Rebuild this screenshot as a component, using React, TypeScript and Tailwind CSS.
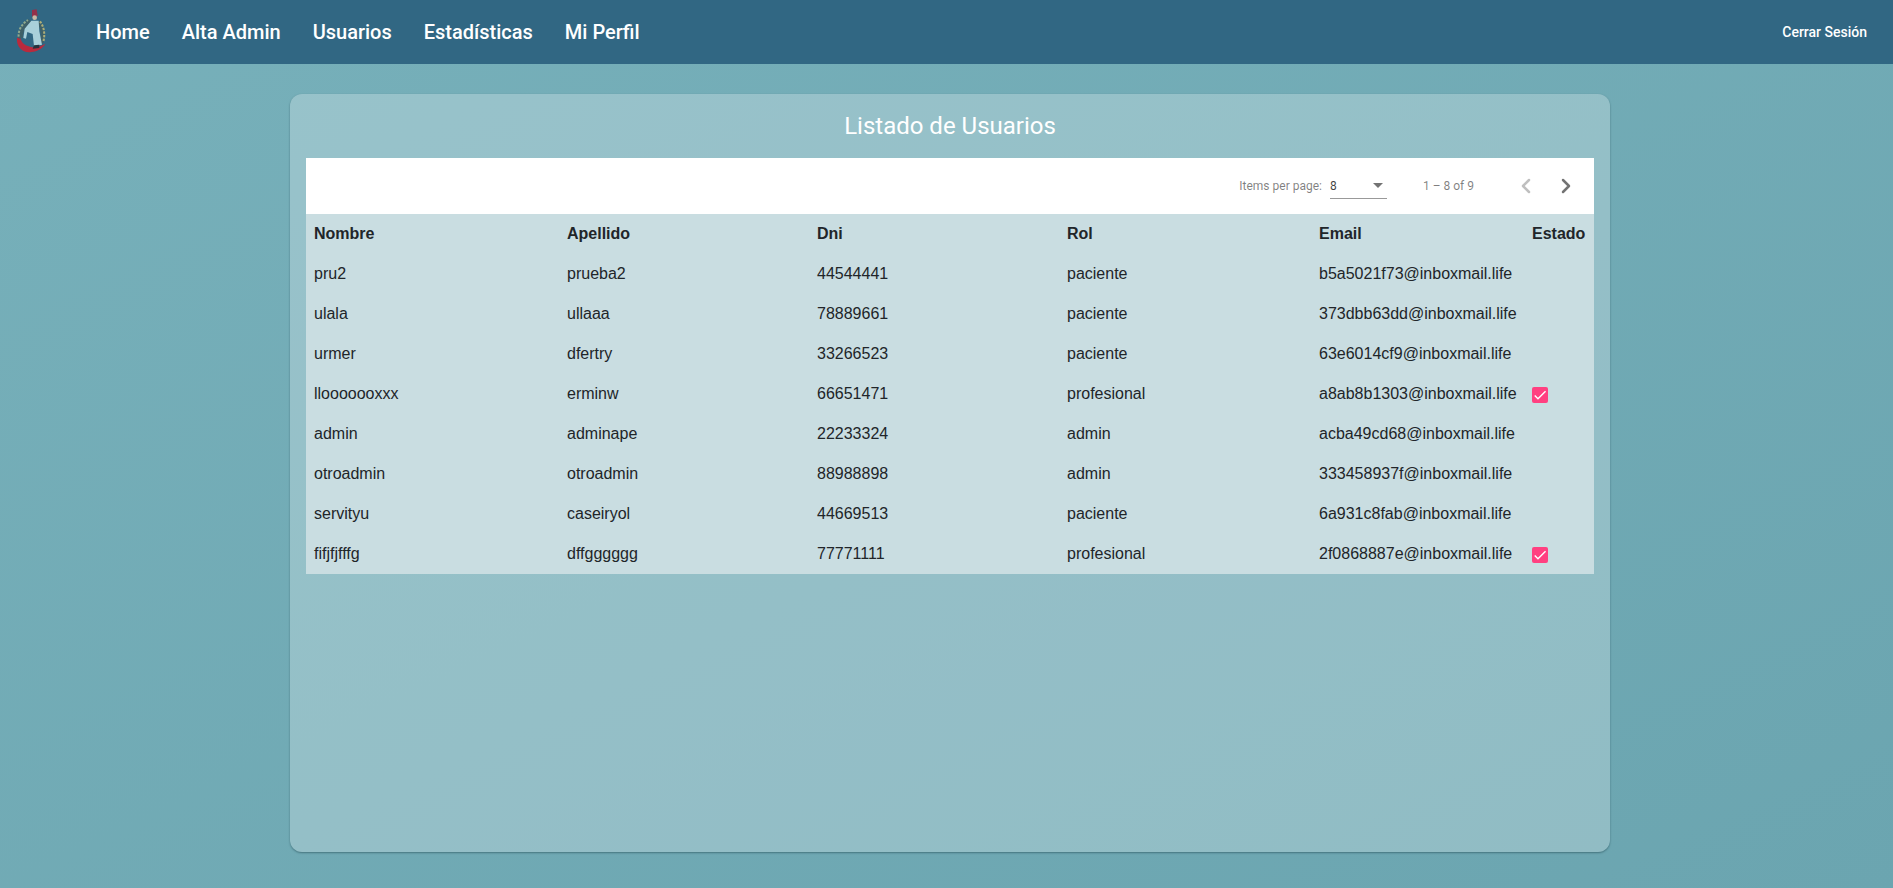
import { ChevronLeft, ChevronRight } from 'lucide-react'

const usuarios = [
  { nombre: 'pru2', apellido: 'prueba2', dni: '44544441', rol: 'paciente', email: 'b5a5021f73@inboxmail.life', estado: false },
  { nombre: 'ulala', apellido: 'ullaaa', dni: '78889661', rol: 'paciente', email: '373dbb63dd@inboxmail.life', estado: false },
  { nombre: 'urmer', apellido: 'dfertry', dni: '33266523', rol: 'paciente', email: '63e6014cf9@inboxmail.life', estado: false },
  { nombre: 'llooooooxxx', apellido: 'erminw', dni: '66651471', rol: 'profesional', email: 'a8ab8b1303@inboxmail.life', estado: true },
  { nombre: 'admin', apellido: 'adminape', dni: '22233324', rol: 'admin', email: 'acba49cd68@inboxmail.life', estado: false },
  { nombre: 'otroadmin', apellido: 'otroadmin', dni: '88988898', rol: 'admin', email: '333458937f@inboxmail.life', estado: false },
  { nombre: 'servityu', apellido: 'caseiryol', dni: '44669513', rol: 'paciente', email: '6a931c8fab@inboxmail.life', estado: false },
  { nombre: 'fifjfjfffg', apellido: 'dffgggggg', dni: '77771111', rol: 'profesional', email: '2f0868887e@inboxmail.life', estado: true },
]

const columnas = [
  { titulo: 'Nombre', ancho: 'w-[253px]' },
  { titulo: 'Apellido', ancho: 'w-[250px]' },
  { titulo: 'Dni', ancho: 'w-[250px]' },
  { titulo: 'Rol', ancho: 'w-[252px]' },
  { titulo: 'Email', ancho: 'w-[213px]' },
  { titulo: 'Estado', ancho: 'w-[70px]' },
]

const links = ['Home', 'Alta Admin', 'Usuarios', 'Estadísticas', 'Mi Perfil']

// logo: figura con alas sobre la media luna roja
function Logo() {
  return (
    <svg width="40" height="52" viewBox="0 0 120 156" className="block">
      <path d="M15 96 C12 124 34 142 58 138 C76 136 92 128 100 113 C86 122 70 126 54 122 C38 119 27 110 25 94 Z" fill="#b92a3d" />
      <path d="M20 98 C16 76 28 52 50 40 L58 48 C42 60 32 76 32 96 Z" fill="#3f6068" />
      <path d="M20 92 C18 74 30 52 48 42" fill="none" stroke="#8fa98e" strokeWidth="6" strokeDasharray="7 4" />
      <path d="M82 44 C96 58 102 84 94 112 L84 112 C90 88 86 66 76 52 Z" fill="#3f6068" />
      <path d="M84 46 C96 62 100 84 94 108" fill="none" stroke="#aeae78" strokeWidth="6" strokeDasharray="7 4" />
      <path d="M60 12 L74 10 L77 30 L60 32 Z" fill="#93304a" />
      <circle cx="68" cy="35" r="7" fill="#c9b8a6" />
      <path d="M58 44 L80 44 L82 76 L90 116 L66 120 L62 84 L46 78 L42 98 L34 96 L38 68 Z" fill="#a9d0da" />
      <path d="M66 118 L82 116 L82 126 L62 128 Z" fill="#26323d" />
    </svg>
  )
}

function Check() {
  return (
    <span className="mt-[2px] block h-4 w-4 rounded-[2px] bg-[#ff4081]">
      <svg width="16" height="16" viewBox="0 0 24 24" fill="none" stroke="white" strokeWidth="2.13" className="block">
        <path d="M4.1 12.7 9 17.6 20.3 6.3" />
      </svg>
    </span>
  )
}

export default function App() {
  return (
    <div className="flex min-h-[888px] flex-col bg-gradient-to-br from-[#77b0ba] to-[#6ba5b0] font-['Roboto',sans-serif]">
      <nav className="flex h-16 items-center bg-[#316783] pr-[16px] pl-[12px] text-white">
        <Logo />
        <div className="ml-[44px] flex gap-8">
          {links.map((l) => (
            <a key={l} className="text-[20px] leading-8 font-medium">{l}</a>
          ))}
        </div>
        <span className="ml-auto pr-[10px] text-sm font-medium">Cerrar Sesión</span>
      </nav>

      <main className="flex justify-center pt-[30px] pl-[7px]">
        <section className="h-[758px] w-[1320px] rounded-xl bg-white/25 px-4 shadow-[0_1px_2px_rgba(40,80,90,0.6)]">
          <h1 className="h-16 pt-[16px] text-center text-2xl leading-8 text-white">Listado de Usuarios</h1>

          <div className="flex h-14 items-center justify-end bg-white pr-[8px] text-xs text-black/50">
            <span>Items per page:</span>
            <div className="mr-[36px] ml-2 flex h-[26px] w-[57px] items-center justify-between border-b border-black/40 pr-[4px] text-black/75">
              <span>8</span>
              <span className="h-0 w-0 border-x-[5px] border-t-[5px] border-x-transparent border-t-black/55" />
            </div>
            <span>1 – 8 of 9</span>
            <div className="ml-[32px] flex">
              <ChevronLeft size={24} strokeWidth={2.5} className="mx-[8px] text-black/25" />
              <ChevronRight size={24} strokeWidth={2.5} className="mx-[8px] text-black/55" />
            </div>
          </div>

          <table className="w-[1288px] table-fixed bg-[#c9dde1] font-['Liberation_Sans',sans-serif] text-base text-[#212529]">
            <thead>
              <tr className="h-10">
                {columnas.map((c) => (
                  <th key={c.titulo} className={`${c.ancho} px-2 text-left font-bold`}>{c.titulo}</th>
                ))}
              </tr>
            </thead>
            <tbody>
              {usuarios.map((u) => (
                <tr key={u.dni} className="h-10">
                  <td className="px-2">{u.nombre}</td>
                  <td className="px-2">{u.apellido}</td>
                  <td className="px-2">{u.dni}</td>
                  <td className="px-2">{u.rol}</td>
                  <td className="px-2">{u.email}</td>
                  <td className="px-2">{u.estado && <Check />}</td>
                </tr>
              ))}
            </tbody>
          </table>
        </section>
      </main>
    </div>
  )
}
